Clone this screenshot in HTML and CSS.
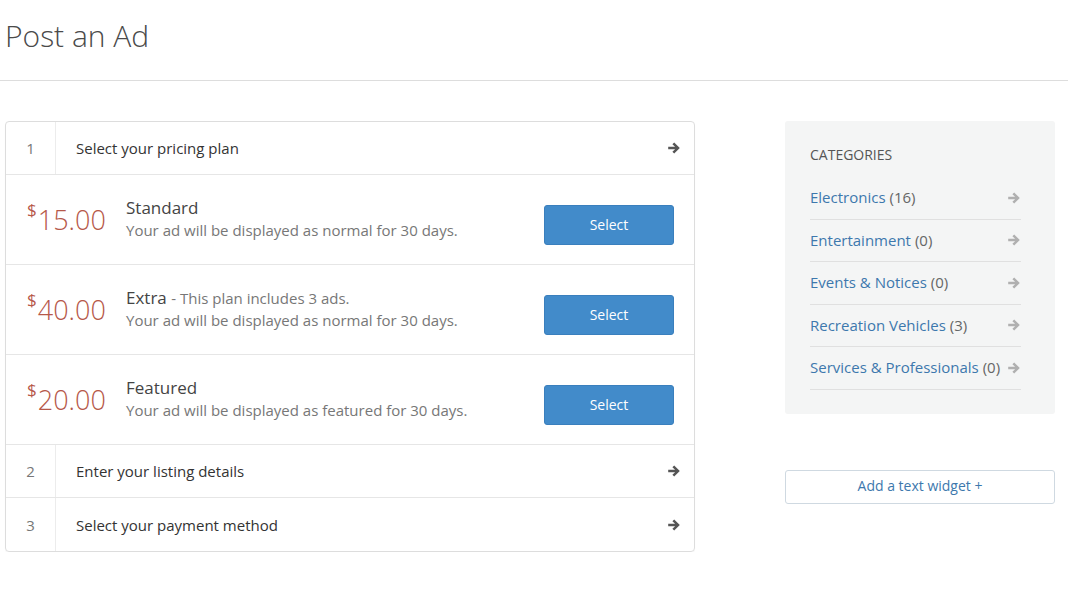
FILE: index.html
```html
<!DOCTYPE html>
<html>
<head>
<meta charset="utf-8">
<link rel="stylesheet" href="styles.css">
</head>
<body>
<header class="page-head">
  <h1 class="page-title">Post an Ad</h1>
</header>
<div class="layout">
  <main class="steps">
    <div class="step">
      <div class="step-num">1</div>
      <div class="step-label">Select your pricing plan</div>
      <svg class="arrow dark" viewBox="0 0 14 14"><path d="M7.2 1.4 L12.8 7 L7.2 12.6 L5.4 10.8 L8.1 8.3 H1.2 V5.7 H8.1 L5.4 3.2 Z"/></svg>
    </div>
    <div class="plan">
      <div class="price"><span class="cur">$</span>15.00</div>
      <div class="plan-info">
        <div class="plan-title">Standard</div>
        <div class="plan-desc">Your ad will be displayed as normal for 30 days.</div>
      </div>
      <button class="btn-select">Select</button>
    </div>
    <div class="plan">
      <div class="price"><span class="cur">$</span>40.00</div>
      <div class="plan-info">
        <div class="plan-title">Extra <span class="plan-note">- This plan includes 3 ads.</span></div>
        <div class="plan-desc">Your ad will be displayed as normal for 30 days.</div>
      </div>
      <button class="btn-select">Select</button>
    </div>
    <div class="plan">
      <div class="price"><span class="cur">$</span>20.00</div>
      <div class="plan-info">
        <div class="plan-title">Featured</div>
        <div class="plan-desc">Your ad will be displayed as featured for 30 days.</div>
      </div>
      <button class="btn-select">Select</button>
    </div>
    <div class="step">
      <div class="step-num">2</div>
      <div class="step-label">Enter your listing details</div>
      <svg class="arrow dark" viewBox="0 0 14 14"><path d="M7.2 1.4 L12.8 7 L7.2 12.6 L5.4 10.8 L8.1 8.3 H1.2 V5.7 H8.1 L5.4 3.2 Z"/></svg>
    </div>
    <div class="step last">
      <div class="step-num">3</div>
      <div class="step-label">Select your payment method</div>
      <svg class="arrow dark" viewBox="0 0 14 14"><path d="M7.2 1.4 L12.8 7 L7.2 12.6 L5.4 10.8 L8.1 8.3 H1.2 V5.7 H8.1 L5.4 3.2 Z"/></svg>
    </div>
  </main>
  <aside class="sidebar">
    <section class="widget">
      <h3 class="widget-title">CATEGORIES</h3>
      <ul class="cat-list">
        <li class="cat"><span><a class="cat-link">Electronics</a> <span class="count">(16)</span></span><svg class="arrow light" viewBox="0 0 14 14"><path d="M7.2 1.4 L12.8 7 L7.2 12.6 L5.4 10.8 L8.1 8.3 H1.2 V5.7 H8.1 L5.4 3.2 Z"/></svg></li>
        <li class="cat"><span><a class="cat-link">Entertainment</a> <span class="count">(0)</span></span><svg class="arrow light" viewBox="0 0 14 14"><path d="M7.2 1.4 L12.8 7 L7.2 12.6 L5.4 10.8 L8.1 8.3 H1.2 V5.7 H8.1 L5.4 3.2 Z"/></svg></li>
        <li class="cat"><span><a class="cat-link">Events &amp; Notices</a> <span class="count">(0)</span></span><svg class="arrow light" viewBox="0 0 14 14"><path d="M7.2 1.4 L12.8 7 L7.2 12.6 L5.4 10.8 L8.1 8.3 H1.2 V5.7 H8.1 L5.4 3.2 Z"/></svg></li>
        <li class="cat"><span><a class="cat-link">Recreation Vehicles</a> <span class="count">(3)</span></span><svg class="arrow light" viewBox="0 0 14 14"><path d="M7.2 1.4 L12.8 7 L7.2 12.6 L5.4 10.8 L8.1 8.3 H1.2 V5.7 H8.1 L5.4 3.2 Z"/></svg></li>
        <li class="cat"><span><a class="cat-link">Services &amp; Professionals</a> <span class="count">(0)</span></span><svg class="arrow light" viewBox="0 0 14 14"><path d="M7.2 1.4 L12.8 7 L7.2 12.6 L5.4 10.8 L8.1 8.3 H1.2 V5.7 H8.1 L5.4 3.2 Z"/></svg></li>
      </ul>
    </section>
    <button class="add-widget">Add a text widget +</button>
  </aside>
</div>
</body>
</html>
```
FILE: styles.css
```css
* { box-sizing: border-box; }
body {
  margin: 0;
  background: #fff;
  font-family: "Open Sans", "Liberation Sans", sans-serif;
  color: #333;
}
.page-head {
  padding: 16px 0 24px 5px;
  border-bottom: 1px solid #dddddd;
  height: 81px;
}
.page-title {
  margin: 0;
  font-size: 30px;
  line-height: 40px;
  font-weight: 300;
  color: #4a4a4a;
}
.layout {
  display: flex;
  align-items: flex-start;
  padding: 40px 0 0 5px;
  gap: 90px;
}
.steps {
  width: 690px;
  border: 1px solid #dddddd;
  border-radius: 4px;
  box-shadow: 0 1px 1px rgba(0,0,0,0.04);
}
.step {
  display: flex;
  align-items: center;
  height: 53px;
  border-bottom: 1px solid #e6e6e6;
}
.step.last { height: 53px; border-bottom: 0; }
.step-num {
  width: 50px;
  align-self: stretch;
  display: flex;
  align-items: center;
  justify-content: center;
  border-right: 1px solid #ececec;
  font-size: 15px;
  color: #777;
}
.step-label {
  flex: 1;
  padding-left: 20px;
  font-size: 15px;
  color: #333;
}
.arrow { width: 14px; height: 14px; display: block; }
.arrow.dark { fill: #555; margin-right: 13px; }
.arrow.light { fill: #b0b0b0; flex: none; }
.plan {
  display: flex;
  align-items: flex-start;
  height: 90px;
  padding: 22px 20px 0 21px;
  border-bottom: 1px solid #e6e6e6;
}
.price {
  width: 99px;
  flex: none;
  margin-top: 6px;
  font-size: 27px;
  line-height: 34px;
  font-weight: 300;
  color: #b65849;
}
.cur {
  font-size: 17px;
  vertical-align: top;
  line-height: 22px;
  position: relative;
  top: -4px;
  margin-right: 1px;
  font-weight: 400;
}
.plan-info { flex: 1; }
.plan-title {
  font-size: 17px;
  line-height: 22px;
  color: #444;
}
.plan-note { font-size: 15px; color: #777; }
.plan-desc {
  font-size: 15px;
  line-height: 22px;
  color: #777;
}
.btn-select {
  margin-top: 8px;
  width: 130px;
  height: 40px;
  background: #428bca;
  border: 1px solid #3a7fbd;
  border-radius: 3px;
  color: #fff;
  font-family: "Open Sans", "Liberation Sans", sans-serif;
  font-size: 14px;
  padding: 0 0 2px;
}
.sidebar { width: 270px; }
.widget {
  background: #f4f5f5;
  border-radius: 3px;
  padding: 24px 34px 24px 25px;
}
.widget-title {
  margin: 0 0 12px;
  font-size: 14px;
  line-height: 20px;
  font-weight: 400;
  color: #555;
}
.cat-list { list-style: none; margin: 0; padding: 0; }
.cat {
  display: flex;
  align-items: center;
  justify-content: space-between;
  padding: 10px 0;
  line-height: 21.5px;
  border-bottom: 1px solid #e0e0e0;
  font-size: 15px;
}
.cat-link { color: #3d78ad; text-decoration: none; }
.count { color: #666; }
.add-widget {
  margin-top: 56px;
  width: 270px;
  height: 34px;
  background: #fff;
  border: 1px solid #cfd9e1;
  border-radius: 3px;
  color: #3d78ad;
  font-family: "Open Sans", "Liberation Sans", sans-serif;
  font-size: 14px;
  padding: 0 0 2px;
}
```
